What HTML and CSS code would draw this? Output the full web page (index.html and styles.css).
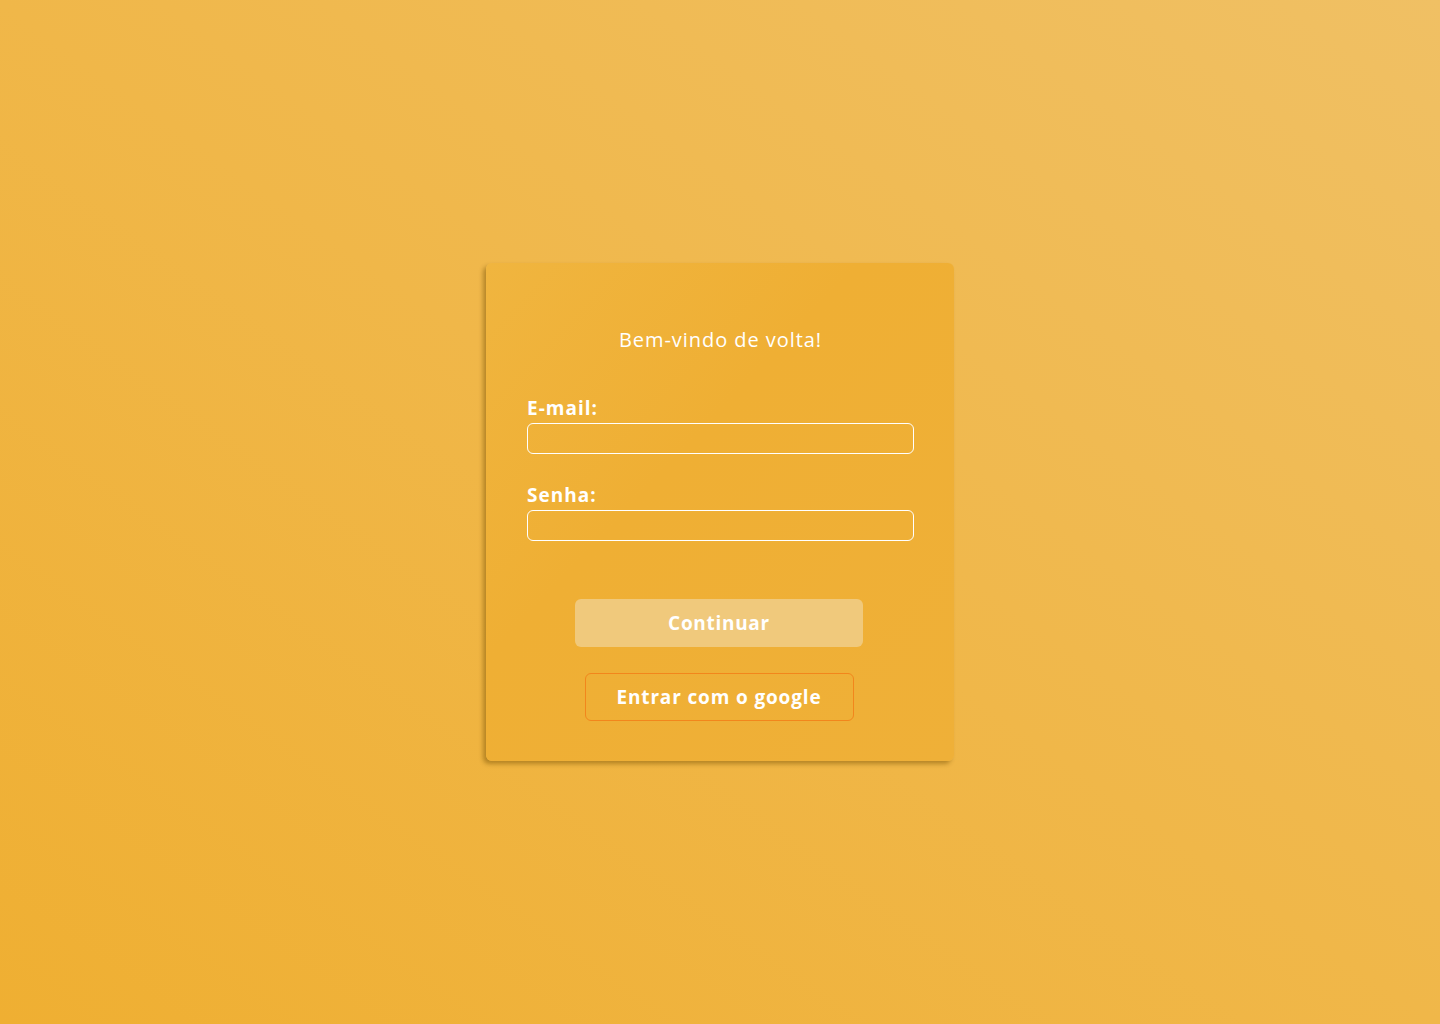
FILE: index.html
```html
<!DOCTYPE html>
<html lang="pt-BR">
<head>
<meta charset="utf-8">
<title>Login</title>
<link rel="stylesheet" href="styles.css">
</head>
<body>
<main class="page">
  <form class="card">
    <h1 class="title">Bem-vindo de volta!</h1>
    <label class="label" for="email">E-mail:</label>
    <input class="field" id="email" type="email">
    <label class="label label-second" for="senha">Senha:</label>
    <input class="field" id="senha" type="password">
    <button class="btn btn-primary" type="button">Continuar</button>
    <button class="btn btn-google" type="button">Entrar com o google</button>
  </form>
</main>
</body>
</html>
```

FILE: styles.css
```css
html, body {
  margin: 0;
  padding: 0;
  height: 100%;
}
body {
  font-family: "Open Sans", "DejaVu Sans", sans-serif;
  background: linear-gradient(to top right, #efaf32 0%, #f0b749 50%, #f0c064 100%);
  color: #ffffff;
}
.page {
  height: 100vh;
  display: flex;
  align-items: center;
  justify-content: center;
}
.card {
  box-sizing: border-box;
  width: 468px;
  height: 498px;
  padding: 65px 40px 38px 41px;
  display: flex;
  flex-direction: column;
  border-radius: 6px;
  background: linear-gradient(to bottom right, #f0b53f 0%, #efaf34 40%, #efb038 100%);
  box-shadow: -3px 3px 4px rgba(110, 75, 0, 0.45);
}
.title {
  margin: 0;
  font-size: 20px;
  line-height: 24px;
  font-weight: 400;
  letter-spacing: 0.95px;
  text-align: center;
}
.label {
  margin-top: 45px;
  font-size: 19px;
  line-height: 22px;
  font-weight: 700;
  letter-spacing: 1px;
}
.label-second {
  margin-top: 30px;
}
.field {
  box-sizing: border-box;
  margin-top: 4px;
  width: 100%;
  height: 31px;
  border: 1px solid #ffffff;
  border-radius: 6px;
  background: transparent;
  outline: none;
  color: #ffffff;
  font: inherit;
}
.btn {
  box-sizing: border-box;
  align-self: center;
  margin-right: 3px;
  height: 48px;
  border-radius: 6px;
  font-family: inherit;
  font-size: 19px;
  font-weight: 700;
  color: #ffffff;
  cursor: pointer;
}
.btn-primary {
  margin-top: 58px;
  width: 288px;
  border: none;
  background: #f0c97c;
  letter-spacing: 0.7px;
}
.btn-google {
  margin-top: 26px;
  width: 269px;
  border: 1px solid #f2861c;
  background: transparent;
  letter-spacing: 0.85px;
}
```
